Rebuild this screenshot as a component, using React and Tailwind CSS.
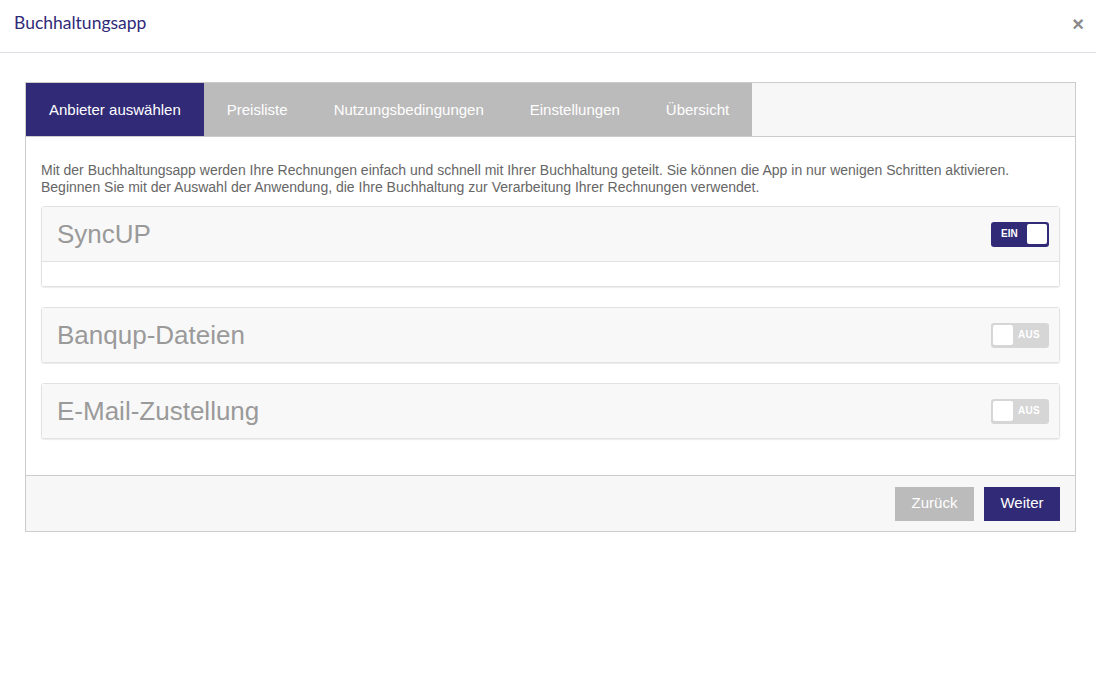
import React from "react";

const tabs = ["Anbieter auswählen", "Preisliste", "Nutzungsbedingungen", "Einstellungen", "Übersicht"];

function Toggle({ on }) {
  if (on) {
    return (
      <div className="flex h-[25px] w-[58px] items-center justify-between rounded-[3px] bg-[#312a76] pl-[10px] pr-[2px]">
        <span className="text-[10px] font-bold leading-none text-white">EIN</span>
        <span className="h-[20px] w-[20px] rounded-[2px] bg-white" />
      </div>
    );
  }
  return (
    <div className="flex h-[25px] w-[58px] items-center justify-between rounded-[3px] bg-[#d6d6d6] pl-[2px] pr-[9px]">
      <span className="h-[20px] w-[20px] rounded-[2px] bg-white" />
      <span className="text-[10px] font-bold leading-none tracking-[0.3px] text-white">AUS</span>
    </div>
  );
}

function Card({ title, on, body }) {
  return (
    <div className="rounded-[3px] border border-[#e2e2e2] bg-white shadow-[0_1px_1px_rgba(0,0,0,0.08)]">
      <div className="flex h-[54px] items-center justify-between bg-[#f8f8f8] pl-[15px] pr-[10px]">
        <span className="text-[26px] leading-none text-[#9a9a9a]">{title}</span>
        <Toggle on={on} />
      </div>
      {body && <div className="h-[25px] border-t border-[#e2e2e2] bg-white" />}
    </div>
  );
}

export default function App() {
  return (
    <div className="min-h-[683px] w-full bg-white" style={{ fontFamily: '"Liberation Sans", Arial, sans-serif' }}>
      <div className="flex h-[53px] items-center justify-between border-b border-[#dee2e6] pb-[5px] pl-[14px] pr-[12px]">
        <span className="text-[17.5px] text-[#2f2a78]" style={{ fontFamily: "Lato, sans-serif" }}>
          Buchhaltungsapp
        </span>
        <span className="text-[20px] font-bold leading-none text-[#8a8a8a]">×</span>
      </div>
      <div className="pl-[25px] pr-[20px] pt-[29px]">
        <div className="border border-[#cccccc]">
          <div className="flex h-[54px] border-b border-[#cccccc] bg-[#f7f7f7]">
            {tabs.map((t, i) => (
              <div
                key={t}
                className={
                  i === 0
                    ? "flex items-center bg-[#312a76] px-[23px] pt-[1px] text-[15px] text-white"
                    : "flex items-center bg-[#bbbbbb] px-[23px] pt-[1px] text-[15px] text-white"
                }
              >
                {t}
              </div>
            ))}
          </div>
          <div className="px-[15px] pb-[36px] pt-[25px]">
            <p className="text-[14px] leading-[17px] text-[#666666]">
              Mit der Buchhaltungsapp werden Ihre Rechnungen einfach und schnell mit Ihrer Buchhaltung geteilt. Sie können die App in nur wenigen Schritten aktivieren.
              <br />
              Beginnen Sie mit der Auswahl der Anwendung, die Ihre Buchhaltung zur Verarbeitung Ihrer Rechnungen verwendet.
            </p>
            <div className="mt-[10px] flex flex-col gap-[20px]">
              <Card title="SyncUP" on body />
              <Card title="Banqup-Dateien" />
              <Card title="E-Mail-Zustellung" />
            </div>
          </div>
          <div className="flex h-[56px] items-center justify-end gap-[10px] border-t border-[#cccccc] bg-[#f7f7f7] px-[15px]">
            <button className="h-[34px] w-[79px] bg-[#bbbbbb] text-[15px] text-white">Zurück</button>
            <button className="h-[34px] w-[76px] bg-[#312a76] text-[15px] text-white">Weiter</button>
          </div>
        </div>
      </div>
    </div>
  );
}
